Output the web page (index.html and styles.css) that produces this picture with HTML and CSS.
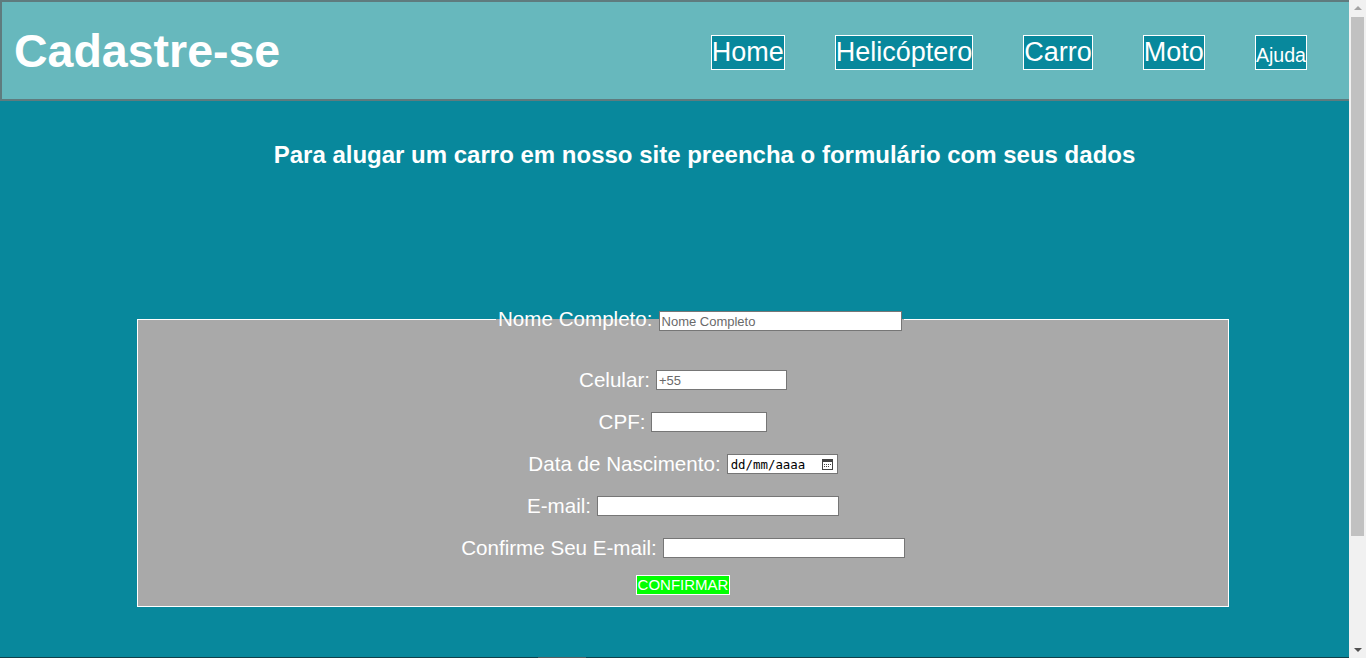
FILE: index.html
```html
<!DOCTYPE html>
<html lang="pt-BR">
<head>
<meta charset="utf-8">
<title>Cadastre-se</title>
<link rel="stylesheet" href="styles.css">
</head>
<body>
<div class="pagina">
  <header class="topo">
    <h1 class="titulo">Cadastre-se</h1>
    <nav class="menu">
      <a class="menu-link" href="#">Home</a>
      <a class="menu-link" href="#">Helicóptero</a>
      <a class="menu-link" href="#">Carro</a>
      <a class="menu-link" href="#">Moto</a>
      <a class="menu-link menu-link-pequeno" href="#">Ajuda</a>
    </nav>
  </header>

  <h2 class="chamada">Para alugar um carro em nosso site preencha o formulário com seus dados</h2>

  <form class="formulario">
    <fieldset class="caixa">
      <legend class="legenda"><span class="rotulo">Nome Completo:</span> <input class="campo campo-nome" type="text" placeholder="Nome Completo"></legend>
      <div class="linha linha-primeira"><span class="rotulo">Celular:</span><input class="campo campo-celular" type="text" placeholder="+55"></div>
      <div class="linha"><span class="rotulo">CPF:</span><input class="campo campo-cpf" type="text"></div>
      <div class="linha"><span class="rotulo">Data de Nascimento:</span><span class="campo campo-data"><span class="data-texto">dd/mm/aaaa</span><svg class="data-icone" width="11" height="11" viewBox="0 0 11 11"><rect x="0.5" y="0.5" width="10" height="10" fill="#fff" stroke="#444"/><rect x="1" y="1" width="9" height="2" fill="#444"/><rect x="2" y="5" width="1" height="1" fill="#444"/><rect x="4" y="5" width="1" height="1" fill="#444"/><rect x="6" y="5" width="1" height="1" fill="#444"/><rect x="8" y="5" width="1" height="1" fill="#444"/><rect x="2" y="7" width="1" height="1" fill="#444"/><rect x="4" y="7" width="1" height="1" fill="#444"/><rect x="6" y="7" width="1" height="1" fill="#444"/></svg></span></div>
      <div class="linha"><span class="rotulo">E-mail:</span><input class="campo campo-email" type="text"></div>
      <div class="linha"><span class="rotulo">Confirme Seu E-mail:</span><input class="campo campo-email" type="text"></div>
      <div class="linha linha-botao"><button class="botao" type="button">CONFIRMAR</button></div>
    </fieldset>
  </form>

  <footer class="rodape">
    <div class="rodape-bloco"></div>
  </footer>
</div>
<div class="barra">
  <div class="barra-seta barra-seta-cima"></div>
  <div class="barra-polegar"></div>
  <div class="barra-seta barra-seta-baixo"></div>
</div>
</body>
</html>
```

FILE: styles.css
```css
html, body {
  margin: 0;
  padding: 0;
}

body {
  display: flex;
  height: 658px;
  overflow: hidden;
  background: #08889c;
  font-family: "Liberation Sans", Arial, sans-serif;
  color: #fff;
}

.pagina {
  flex: 1;
  min-width: 0;
}

.topo {
  display: flex;
  align-items: center;
  justify-content: space-between;
  height: 97px;
  border: 2px solid #5f7b7e;
  border-right: none;
  background: #67b8bd;
  padding: 0 42px 0 12px;
}

.titulo {
  margin: 0;
  font-size: 46.5px;
  font-weight: bold;
  color: #fff;
}

.menu {
  display: flex;
  align-items: center;
  gap: 50px;
  margin-top: 4px;
}

.menu-link {
  display: block;
  height: 33px;
  line-height: 33px;
  border: 1px solid #fff;
  background: #08889c;
  color: #fff;
  font-size: 27px;
  text-decoration: none;
}

.menu-link-pequeno {
  font-size: 19.6px;
  line-height: 38px;
}

.chamada {
  margin: 40px 0 0 0;
  padding-left: 60px;
  text-align: center;
  font-size: 24px;
  font-weight: bold;
  line-height: 28px;
}

.formulario {
  margin-top: 138px;
  padding-left: 137px;
}

.caixa {
  box-sizing: border-box;
  width: 1092px;
  margin: 0;
  padding: 0 0 11px 0;
  border: 1px solid #fff;
  background: #a9a9a9;
  min-width: 0;
}

.legenda {
  margin-left: 358px;
  padding: 0 2px;
  display: flex;
  align-items: center;
  height: 24px;
}

.legenda .rotulo {
  margin-right: 6px;
}

.legenda .campo-nome {
  margin-top: 4px;
}

.linha {
  display: flex;
  justify-content: center;
  align-items: center;
  gap: 6px;
  height: 24px;
  margin-top: 18px;
}

.linha-primeira {
  margin-top: 37px;
}

.linha-botao {
  margin-top: 15px;
  height: 20px;
}

.rotulo {
  font-size: 20.6px;
  color: #fff;
}

.campo {
  box-sizing: border-box;
  height: 20px;
  padding: 1px 2px;
  border: 1px solid #767676;
  background: #fff;
  font-family: "Liberation Sans", Arial, sans-serif;
  font-size: 13px;
  color: #000;
  outline: none;
}

.campo::placeholder {
  color: #6a6a6a;
}

.campo-nome { width: 243px; }
.campo-celular { width: 131px; }
.campo-cpf { width: 116px; }
.campo-email { width: 242px; }

.campo-data {
  display: inline-flex;
  align-items: center;
  justify-content: space-between;
  width: 111px;
  padding: 0 4px 0 3px;
}

.data-texto {
  font-family: "DejaVu Sans Mono", "Liberation Mono", monospace;
  font-size: 12.4px;
  color: #000;
}

.data-icone {
  display: block;
}

.botao {
  box-sizing: border-box;
  height: 20px;
  padding: 0 1px;
  border: 1px solid #fff;
  background: #00ff00;
  color: #fff;
  font-family: "Liberation Sans", Arial, sans-serif;
  font-size: 15px;
  line-height: 18px;
}

.rodape {
  margin-top: 50px;
  height: 324px;
  background: #10414b;
}

.rodape-bloco {
  margin-left: 538px;
  width: 48px;
  height: 40px;
  background: #555f62;
}

.barra {
  flex: 0 0 17px;
  display: flex;
  flex-direction: column;
  align-items: center;
  height: 658px;
  background: #f1f1f1;
}

.barra-seta {
  width: 0;
  height: 0;
  border-left: 4px solid transparent;
  border-right: 4px solid transparent;
}

.barra-seta-cima {
  margin-top: 6px;
  border-bottom: 4px solid #a3a3a3;
}

.barra-polegar {
  width: 13px;
  height: 519px;
  margin-top: 7px;
  background: #c1c1c1;
}

.barra-seta-baixo {
  margin-top: auto;
  margin-bottom: 6px;
  border-top: 4px solid #505050;
}
```
